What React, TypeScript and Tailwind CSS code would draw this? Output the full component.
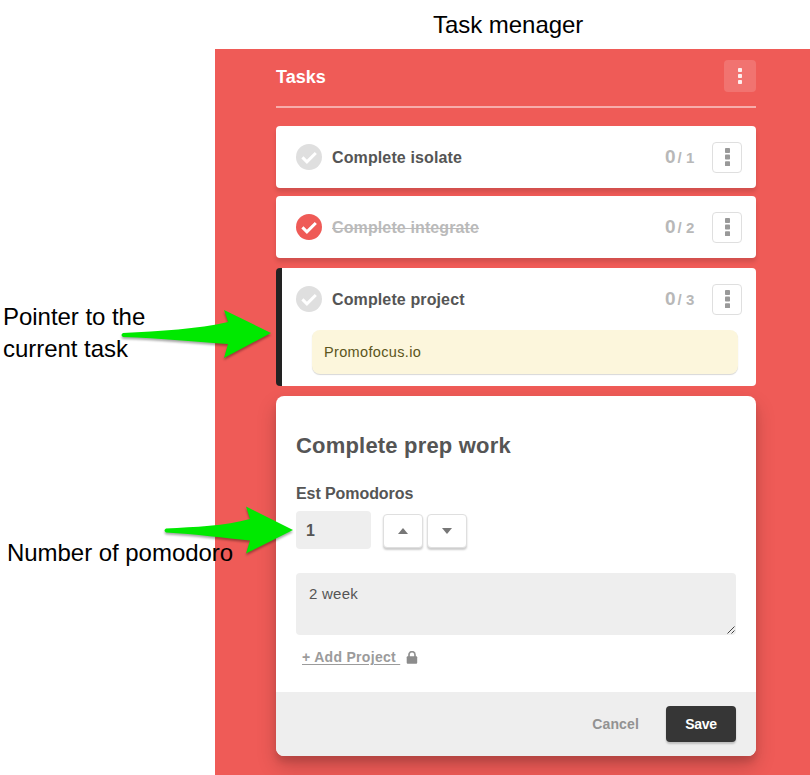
import type { ReactNode } from "react";

type Task = { name: string; total: number; done?: boolean; current?: boolean; note?: string };

const tasks: Task[] = [
  { name: "Complete isolate", total: 1 },
  { name: "Complete integrate", total: 2, done: true },
  { name: "Complete project", total: 3, current: true, note: "Promofocus.io" },
];

function Check({ done }: { done?: boolean }) {
  return (
    <svg width="26" height="26" viewBox="0 0 26 26" className="shrink-0">
      <circle cx="13" cy="13" r="13" fill={done ? "#ef5b57" : "#dfdfdf"} />
      <path d="M6.4 13.4 L10.9 17.9 L19.8 9" fill="none" stroke="#fff" strokeWidth="3" />
    </svg>
  );
}

function Dots({ size, pitch, color }: { size: number; pitch: number; color: string }) {
  const height = size + pitch * 2;
  return (
    <svg width={size} height={height} viewBox={`0 0 ${size} ${height}`} fill={color}>
      <rect width={size} height={size} rx="0.8" />
      <rect y={pitch} width={size} height={size} rx="0.8" />
      <rect y={pitch * 2} width={size} height={size} rx="0.8" />
    </svg>
  );
}

function TaskCard({ task }: { task: Task }) {
  return (
    <article
      className={
        "overflow-hidden rounded-[4px] bg-white " +
        (task.current
          ? "mt-[10px] h-[118px] border-l-[6px] border-[#222] pl-[14px]"
          : "mb-2 h-[62px] pl-5 shadow-[0_4px_4px_rgba(0,0,0,0.12)]")
      }
    >
      <div className="flex h-[62px] items-center pr-[14px]">
        <Check done={task.done} />
        <span
          className={
            "ml-[10px] flex-1 pt-px text-[16px] font-bold leading-5 tracking-[0.12px] " +
            (task.done ? "text-[#bababa] line-through" : "text-[#555]")
          }
        >
          {task.name}
        </span>
        <span className="mr-[18px] flex w-[29px] items-baseline whitespace-nowrap pt-px font-bold text-[#b8b8b8]">
          <span className="text-[19px] leading-6">0</span>
          <span className="ml-[2px] text-[15px]">/ {task.total}</span>
        </span>
        <button className="mt-px flex h-[31px] w-[30px] items-start justify-center rounded-[4px] border border-[#dfdfdf] pt-[5px]">
          <Dots size={5} pitch={6.6} color="#999" />
        </button>
      </div>
      {task.note && (
        <p className="ml-4 mr-[18px] flex h-[44px] items-center rounded-[8px] bg-[#fcf6dc] pl-3 pt-px text-[14.5px] tracking-[0.35px] text-[#5b5520] shadow-[0_1px_1px_rgba(0,0,0,0.16)]">
          {task.note}
        </p>
      )}
    </article>
  );
}

function StepButton({ children }: { children: ReactNode }) {
  return (
    <button className="flex h-[34px] w-10 items-center justify-center rounded-[4px] border border-[#dfdfdf] bg-white shadow-[0_2px_2px_rgba(0,0,0,0.2)]">
      <svg width="10" height="6" viewBox="0 0 10 6" fill="#777">{children}</svg>
    </button>
  );
}

function TaskForm() {
  return (
    <form className="mt-[10px] flex h-[360px] flex-col overflow-hidden rounded-[8px] bg-white shadow-[0_10px_20px_rgba(0,0,0,0.19),0_6px_6px_rgba(0,0,0,0.1)]">
      <div className="h-[296px] px-5 pt-9 text-[#555]">
        <h2 className="text-[22px] font-bold leading-[28px] tracking-[0.19px]">Complete prep work</h2>
        <label className="mt-6 block text-[16px] font-bold leading-5 tracking-[-0.08px]">Est Pomodoros</label>
        <div className="mt-[7px] flex">
          <div className="flex h-[38px] w-[75px] items-center rounded-[4px] bg-[#eee] pl-[10px] pt-px text-[16px] font-bold">1</div>
          <div className="ml-3 mt-[3px] flex gap-1">
            <StepButton><path d="M5 0 L10 6 H0 Z" /></StepButton>
            <StepButton><path d="M0 0 H10 L5 6 Z" /></StepButton>
          </div>
        </div>
        <div className="mt-6 flex h-[62px] justify-between rounded-[4px] bg-[#eee] pl-[13px] pt-3">
          <span className="text-[15px] leading-[18px] tracking-[0.25px]">2 week</span>
          <svg className="mb-px mr-px self-end" width="8" height="8" viewBox="0 0 8 8" stroke="#444" strokeWidth="1" fill="none">
            <path d="M0.5 7.5 L7.5 0.5 M4.5 7.5 L7.5 4.5" />
          </svg>
        </div>
        <div className="ml-[6px] mt-[13px] flex items-center text-[#9b9b9b]">
          <a className="whitespace-pre text-[14px] font-bold leading-[18px] tracking-[0.3px] underline underline-offset-2">{"+ Add Project "}</a>
          <svg className="ml-[6px]" width="12" height="13" viewBox="0 0 12 13">
            <path d="M3 6 V3.7 a3 3 0 0 1 6 0 V6" fill="none" stroke="#929292" strokeWidth="1.7" />
            <rect x="0.7" y="5.2" width="10.5" height="7.5" rx="1" fill="#8c8c8c" />
          </svg>
        </div>
      </div>
      <footer className="flex flex-1 items-center justify-end bg-[#eee] pr-5 text-[14px] font-bold">
        <button className="mr-[27px] tracking-[0.15px] text-[#929292]">Cancel</button>
        <button className="h-9 w-[70px] rounded-[4px] bg-[#363636] tracking-[-0.25px] text-white shadow-[0_2px_2px_rgba(0,0,0,0.2)]">Save</button>
      </footer>
    </form>
  );
}

function Arrow({ className, d }: { className: string; d: string }) {
  return (
    <svg className={className} width="160" height="60" viewBox="0 0 160 60">
      <path d={d} fill="#00e900" className="drop-shadow-[0_2px_1px_rgba(0,0,0,0.35)]" />
    </svg>
  );
}

export default function App() {
  return (
    <div className="relative h-[775px] w-[810px] overflow-hidden bg-white font-['Liberation_Sans',Arial,sans-serif]">
      <h1 className="flex h-[49px] items-center pl-[433px] pt-px text-[24px] tracking-[-0.04px] text-black">Task menager</h1>
      <main className="ml-[215px] h-[726px] overflow-hidden bg-[#ef5b57] pl-[61px] pr-[54px] pt-[11px]">
        <header className="mb-[18px] flex h-12 items-start justify-between border-b-2 border-[#f7adab]">
          <h2 className="mt-[5px] text-[18px] font-bold leading-6 text-white">Tasks</h2>
          <button className="flex h-8 w-8 items-center justify-center rounded-[4px] bg-[#f17370]">
            <Dots size={4} pitch={6} color="#fdeeee" />
          </button>
        </header>
        <section>
          {tasks.map((task) => <TaskCard key={task.name} task={task} />)}
        </section>
        <TaskForm />
      </main>
      <p className="absolute left-[3px] top-[301px] whitespace-nowrap text-[24px] leading-8 tracking-[-0.04px] text-black">Pointer to the<br />current task</p>
      <p className="absolute left-[7px] top-[537px] whitespace-nowrap text-[24px] leading-8 tracking-[-0.04px] text-black">Number of pomodoro</p>
      <Arrow
        className="absolute left-[120px] top-[310px] overflow-visible"
        d="M3 23 C40 21 78 19 108 12 L104 0 L151 23 L104 48 L108 34 C78 32 40 28 3 27 Q0 25 3 23 Z"
      />
      <Arrow
        className="absolute left-[163px] top-[507px] overflow-visible"
        d="M3 21.5 C32 20 62 19 87 12 L83 -0.5 L130 23 L83 46.5 L87 33.5 C62 31 32 27 3 25.5 Q0 23.5 3 21.5 Z"
      />
    </div>
  );
}
